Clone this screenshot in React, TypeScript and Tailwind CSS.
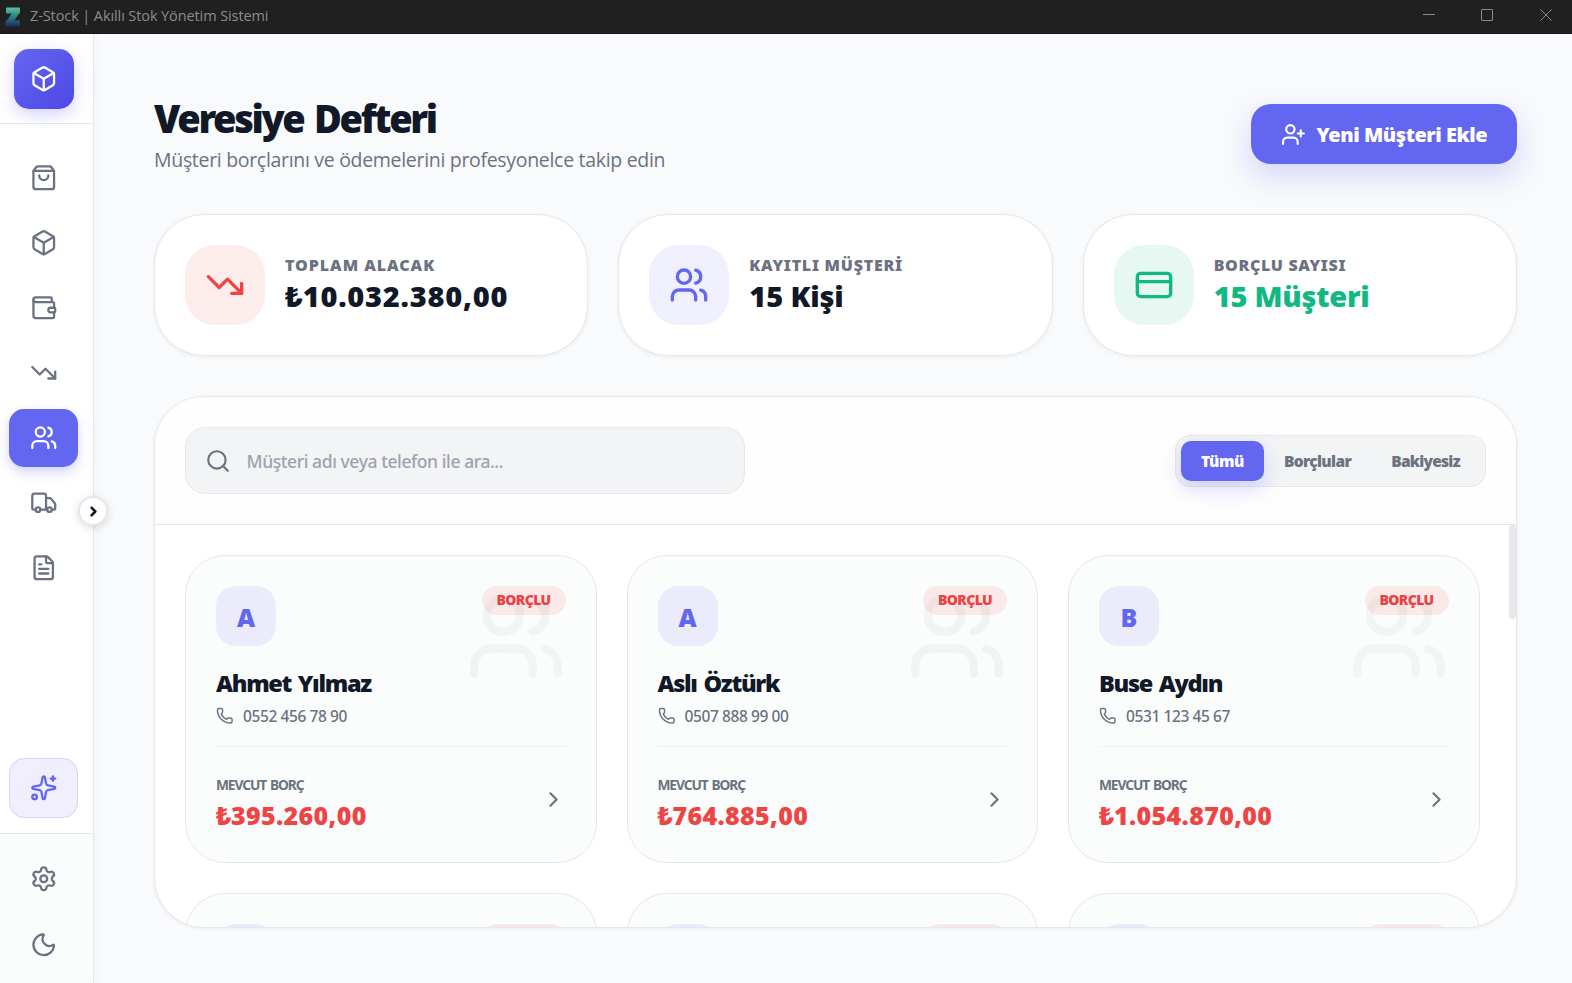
import {
  Box,
  ChevronRight,
  CreditCard,
  FileText,
  Moon,
  Phone,
  Search,
  Settings,
  ShoppingBag,
  Sparkles,
  TrendingDown,
  Truck,
  UserPlus,
  Users,
  Wallet,
  type LucideIcon,
} from 'lucide-react';
import { useState } from 'react';
import clsx from 'clsx';

interface Customer {
  name: string;
  phone: string;
  debt: string;
}

interface Stat {
  label: string;
  value: string;
  icon: LucideIcon;
  iconClass: string;
  labelClass: string;
  valueClass: string;
}

const customers: Customer[] = [
  { name: 'Ahmet Yılmaz', phone: '0552 456 78 90', debt: '₺395.260,00' },
  { name: 'Aslı Öztürk', phone: '0507 888 99 00', debt: '₺764.885,00' },
  { name: 'Buse Aydın', phone: '0531 123 45 67', debt: '₺1.054.870,00' },
];

const stats: Stat[] = [
  {
    label: 'TOPLAM ALACAK',
    value: '₺10.032.380,00',
    icon: TrendingDown,
    iconClass: 'bg-[#fdecec] text-[#ef4444]',
    labelClass: 'tracking-[0.95px]',
    valueClass: 'text-[#111827] tracking-[0.75px]',
  },
  {
    label: 'KAYITLI MÜŞTERİ',
    value: '15 Kişi',
    icon: Users,
    iconClass: 'bg-[#efeffe] text-[#6366f1]',
    labelClass: 'tracking-[0.75px]',
    valueClass: 'text-[#111827] tracking-[-0.15px]',
  },
  {
    label: 'BORÇLU SAYISI',
    value: '15 Müşteri',
    icon: CreditCard,
    iconClass: 'bg-[#e7f8f2] text-[#10b981]',
    labelClass: 'tracking-[0.65px]',
    valueClass: 'text-[#10b981] tracking-[-0.25px]',
  },
];

const navItems: { id: string; icon: LucideIcon }[] = [
  { id: 'sales', icon: ShoppingBag },
  { id: 'products', icon: Box },
  { id: 'wallet', icon: Wallet },
  { id: 'expenses', icon: TrendingDown },
  { id: 'customers', icon: Users },
  { id: 'suppliers', icon: Truck },
  { id: 'reports', icon: FileText },
];

const filters = [
  { label: 'Tümü', className: 'w-[83px] tracking-[-0.45px]' },
  { label: 'Borçlular', className: 'w-[107px] tracking-[-0.65px]' },
  { label: 'Bakiyesiz', className: 'w-[109px] tracking-[-0.75px]' },
];

function TitleBar() {
  return (
    <header className="flex h-[34px] shrink-0 items-center border-b border-[#19151f] bg-[#202020] text-[#8b8b8b]">
      <svg className="ml-[5px]" width="16" height="20" viewBox="0 0 16 20">
        <defs>
          <linearGradient id="brand" x1="0" y1="0" x2="0" y2="20" gradientUnits="userSpaceOnUse">
            <stop offset="0" stopColor="#5fc79a" />
            <stop offset="0.5" stopColor="#2b7f8a" />
            <stop offset="1" stopColor="#1d2560" />
          </linearGradient>
        </defs>
        <rect x="1" y="0.5" width="14" height="6" rx="1" fill="url(#brand)" />
        <line x1="12" y1="4" x2="4" y2="16" stroke="url(#brand)" strokeWidth="6" />
        <rect x="0.5" y="13.5" width="14.5" height="6" rx="1" fill="url(#brand)" />
      </svg>
      <span className="ml-[9px] pb-px font-['Open_Sans',sans-serif] text-[14.5px] tracking-[-0.1px]">
        Z-Stock | Akıllı Stok Yönetim Sistemi
      </span>
      <div className="mr-5 ml-auto flex items-center gap-[46px] pb-[3px]">
        <svg width="12" height="12" viewBox="0 0 12 12" stroke="currentColor">
          <path d="M0 5.5h12" />
        </svg>
        <svg className="mr-px" width="12" height="12" viewBox="0 0 12 12" fill="none" stroke="currentColor">
          <rect x="0.5" y="0.5" width="11" height="11" rx="0.5" />
        </svg>
        <svg width="12" height="12" viewBox="0 0 12 12" stroke="currentColor">
          <path d="M0.3 0.3l11.4 11.4M11.7 0.3L0.3 11.7" />
        </svg>
      </div>
    </header>
  );
}

function Sidebar() {
  const [active, setActive] = useState('customers');

  return (
    <aside className="relative z-10 flex w-[94px] shrink-0 flex-col border-r border-[#e5e7eb] bg-white text-[#6b7280] shadow-[2px_0_8px_rgba(0,0,0,0.03)]">
      <div className="h-[90px] border-b border-[#e5e7eb] pt-[15px] pl-[14px]">
        <div className="flex size-[60px] items-center justify-center rounded-[15px] bg-linear-to-br from-[#6366f1] to-[#4f46e5] text-white shadow-[0_5px_15px_rgba(99,102,241,0.3)]">
          <Box size={27.5} />
        </div>
      </div>

      <nav className="flex flex-1 flex-col gap-[7.5px] pt-[25px] pl-[9px]">
        {navItems.map(({ id, icon: Icon }) => (
          <button
            key={id}
            onClick={() => setActive(id)}
            className={clsx(
              'flex h-[57.5px] w-[69px] items-center justify-center rounded-[15px]',
              active === id && 'bg-[#6366f1] text-white shadow-[0_5px_12px_rgba(99,102,241,0.28)]'
            )}
          >
            <Icon size={27.5} />
          </button>
        ))}
      </nav>

      <button className="mb-[15px] ml-[9px] flex h-[60px] w-[69px] items-center justify-center rounded-[15px] border border-[#d8d2fa] bg-linear-to-br from-[#efeffe] to-[#f3eefd] text-[#6366f1]">
        <Sparkles size={27.5} />
      </button>

      <div className="flex h-[150px] flex-col gap-[6px] border-t border-[#e5e7eb] bg-[#fbfdfc] pt-[15px] pl-[9px]">
        <button className="flex h-[60px] w-[69px] items-center justify-center">
          <Settings size={27.5} />
        </button>
        <button className="flex h-[60px] w-[69px] items-center justify-center">
          <Moon size={27.5} />
        </button>
      </div>

      {/* Expand handle sits on the sidebar's edge */}
      <button className="absolute top-[462px] -right-[15px] flex size-[30px] items-center justify-center rounded-full border-2 border-[#e5e7eb] bg-white pt-px pl-px text-[#111827] shadow-[0_2px_8px_rgba(0,0,0,0.14)]">
        <ChevronRight size={15} strokeWidth={4} />
      </button>
    </aside>
  );
}

function StatCard({ stat }: { stat: Stat }) {
  const Icon = stat.icon;
  return (
    <div className="flex items-center gap-5 rounded-[50px] border border-[#e5e7eb] bg-white p-[30px] shadow-[0_1px_4px_rgba(0,0,0,0.06)]">
      <div className={clsx('flex size-20 items-center justify-center rounded-[30px]', stat.iconClass)}>
        <Icon size={40} />
      </div>
      <div className="pb-[3px] whitespace-nowrap">
        <p className={clsx('text-base leading-6 font-black text-[#6b7280]', stat.labelClass)}>{stat.label}</p>
        <p className={clsx('text-[29px] leading-[37px] font-black', stat.valueClass)}>{stat.value}</p>
      </div>
    </div>
  );
}

const cardClass = 'relative h-[308px] overflow-hidden rounded-[40px] border border-[#e5e7eb] bg-[#fbfdfc] p-[30px]';

function CustomerCard({ customer }: { customer: Customer }) {
  return (
    <div className={cardClass}>
      <Users size={100} className="absolute top-[30px] right-[30px] text-[#111827] opacity-[0.03]" />
      <div className="flex items-start justify-between">
        <div className="flex size-[60px] items-center justify-center rounded-[20px] bg-[#ebebfc] pt-1 text-[25px] font-black text-[#6366f1]">
          {customer.name[0]}
        </div>
        <span className="flex h-[29px] w-[84px] items-center justify-center rounded-full bg-[#ef4444]/10 pb-[2px] text-sm font-black tracking-[-0.6px] text-[#ef4444]">
          BORÇLU
        </span>
      </div>
      <h3 className="mt-5 text-[23.5px] leading-[34px] font-black tracking-[-1.32px] text-[#111827] [word-spacing:2px]">
        {customer.name}
      </h3>
      <div className="mt-[5px] flex h-[22px] items-center gap-[9.5px] text-[#6b7280]">
        <Phone size={17.5} className="-mt-[1px]" />
        <span className="text-[15.5px] leading-[22px] font-medium tracking-[-0.4px]">{customer.phone}</span>
      </div>
      <div className="mt-[19px] border-t border-[#eff1f3]" />
      <div className="mt-[25px] flex items-center justify-between">
        <div>
          <p className="text-[13.75px] leading-[25px] font-bold tracking-[-1.1px] text-[#6b7280] [word-spacing:1.5px]">
            MEVCUT BORÇ
          </p>
          <p className="text-[25px] leading-[37px] font-black tracking-[0.35px] text-[#ef4444]">{customer.debt}</p>
        </div>
        <ChevronRight size={25} className="mb-[7px] text-[#6b7280]" />
      </div>
    </div>
  );
}

// Top edge of the row that follows in the scroll area
function CardPeek() {
  return (
    <div className={cardClass}>
      <div className="flex items-start justify-between">
        <div className="size-[60px] rounded-[20px] bg-[#ebebfc]" />
        <div className="h-[29px] w-[84px] rounded-full bg-[#ef4444]/10" />
      </div>
    </div>
  );
}

export default function App() {
  const [filter, setFilter] = useState('Tümü');

  return (
    <div className="flex h-[983px] w-[1572px] flex-col overflow-hidden bg-[#f9fafc] font-['Noto_Sans','Open_Sans',sans-serif]">
      <TitleBar />
      <div className="flex min-h-0 flex-1">
        <Sidebar />
        <main className="flex min-w-0 flex-1 flex-col pt-[60px] pr-[55px] pb-[55px] pl-[60px]">
          <div className="flex items-center justify-between">
            <div>
              <h1 className="text-[38px] leading-[49px] font-black tracking-[-2.35px] text-[#111827] [word-spacing:3px]">
                Veresiye Defteri
              </h1>
              <p className="mt-[3px] font-['Open_Sans','Noto_Sans',sans-serif] text-[19.5px] leading-7 tracking-[-0.31px] text-[#6b7280]">
                Müşteri borçlarını ve ödemelerini profesyonelce takip edin
              </p>
            </div>
            <button className="flex h-[60px] w-[266px] items-center gap-[10.5px] rounded-[20px] bg-[#6366f1] pl-[30px] text-[20px] font-black tracking-[-0.46px] whitespace-nowrap text-white shadow-[0_12px_31px_rgba(99,102,241,0.25)]">
              <UserPlus size={25} />
              <span className="pt-[2px]">Yeni Müşteri Ekle</span>
            </button>
          </div>

          <div className="mt-10 grid grid-cols-3 gap-[30px]">
            {stats.map((s) => (
              <StatCard key={s.label} stat={s} />
            ))}
          </div>

          <section className="mt-10 flex min-h-0 flex-1 flex-col overflow-hidden rounded-[50px] border border-[#e5e7eb] bg-white shadow-[0_1px_4px_rgba(0,0,0,0.06)]">
            <div className="flex items-center justify-between border-b border-[#e5e7eb] bg-[#fefefe] p-[30px]">
              <label className="flex h-[67px] w-[560px] items-center gap-[16px] rounded-[20px] border border-[#e5e7eb] bg-[#f3f4f6] pl-[18.5px]">
                <Search size={26} className="text-[#6b7280]" />
                <input
                  placeholder="Müşteri adı veya telefon ile ara..."
                  className="flex-1 bg-transparent pt-[2px] text-[17.5px] font-medium tracking-[-0.42px] outline-none placeholder:text-[#9ca3af]"
                />
              </label>
              <div className="flex rounded-[15px] border border-[#e5e7eb] bg-[#f3f4f6] p-[5px]">
                {filters.map(({ label, className }) => (
                  <button
                    key={label}
                    onClick={() => setFilter(label)}
                    className={clsx(
                      'h-10 rounded-[10px] pt-[2px] text-[15.5px] font-black',
                      className,
                      filter === label
                        ? 'bg-[#6366f1] text-white shadow-[0_8px_20px_rgba(99,102,241,0.25)]'
                        : 'text-[#6b7280]'
                    )}
                  >
                    {label}
                  </button>
                ))}
              </div>
            </div>

            <div className="flex min-h-0 flex-1">
              <div className="grid flex-1 auto-rows-[308px] grid-cols-3 gap-[30px] overflow-hidden py-[30px] pr-[29.5px] pl-[30px]">
                {customers.map((c) => (
                  <CustomerCard key={c.name} customer={c} />
                ))}
                <CardPeek />
                <CardPeek />
                <CardPeek />
              </div>
              <div className="w-[7px]">
                <div className="h-[94px] rounded-full bg-[#e5e7eb]" />
              </div>
            </div>
          </section>
        </main>
      </div>
    </div>
  );
}
